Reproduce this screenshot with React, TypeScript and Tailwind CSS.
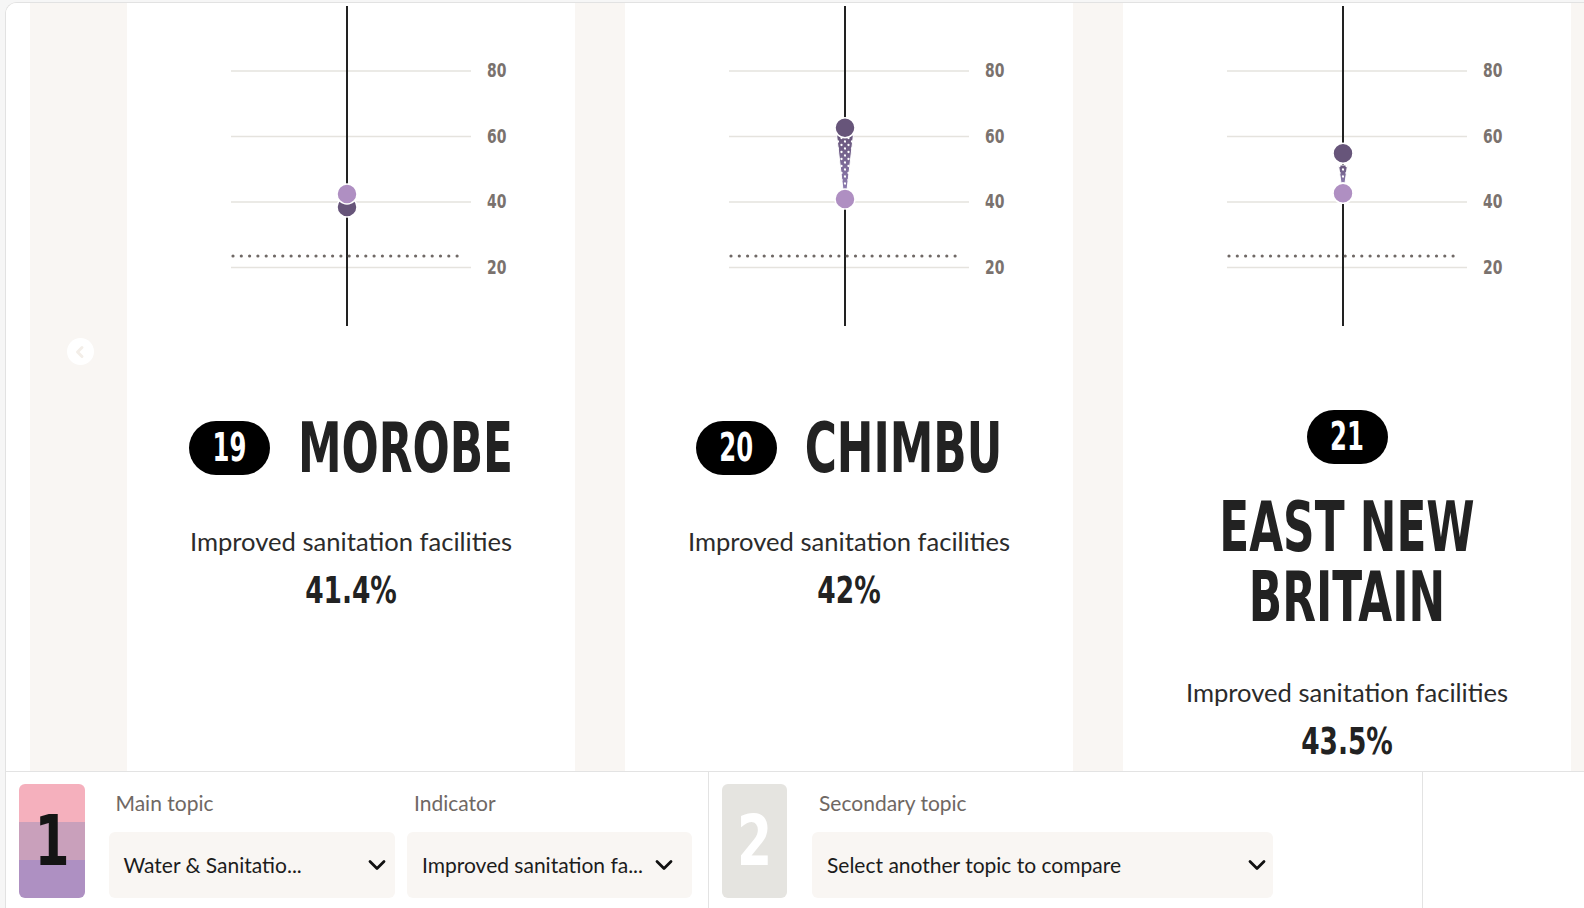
import React from "react";

const COND =
  "font-['Liberation_Sans_Narrow','DejaVu_Sans_Condensed','Liberation_Sans',sans-serif] font-bold";
const LATO = "font-['Lato','Noto_Sans',sans-serif]";

type Conn = { top: number; bottom: number; topHalf: number; bottomHalf: number };

function Chart({ id, dark, light, conn }: { id: string; dark: number; light: number; conn?: Conn }) {
  const X = 220;
  const grid = [
    { v: 80, y: 68 },
    { v: 60, y: 133.5 },
    { v: 40, y: 199 },
    { v: 20, y: 264.5 },
  ];
  const pts = conn
    ? `${X - conn.topHalf},${conn.top} ${X + conn.topHalf},${conn.top} ${X + conn.bottomHalf},${conn.bottom} ${X - conn.bottomHalf},${conn.bottom}`
    : "";
  return (
    <svg width="448" height="330" viewBox="0 0 448 330" className="block shrink-0">
      <defs>
        <linearGradient id={`g${id}`} x1="0" y1="0" x2="0" y2="1">
          <stop offset="0" stopColor="#67557a" />
          <stop offset="1" stopColor="#8e7db0" />
        </linearGradient>
        <pattern id={`p${id}`} width="7" height="7" patternUnits="userSpaceOnUse" x={X - 6} y="0">
          <circle cx="2.5" cy="2" r="1.15" fill="#ffffff" />
          <circle cx="6" cy="5.5" r="1.15" fill="#ffffff" />
        </pattern>
      </defs>
      {grid.map((g) => (
        <line key={`l${g.v}`} x1={104} x2={344} y1={g.y} y2={g.y} stroke="#e5e3de" strokeWidth="1.5" />
      ))}
      {grid.map((g) => (
        <text
          key={`t${g.v}`}
          transform={`translate(360 ${g.y + 6.4}) scale(1 1.2)`}
          x={0}
          y={0}
          fill="#7a726e"
          fontSize="15.5"
          className={COND}
        >
          {g.v}
        </text>
      ))}
      <line x1={X} x2={X} y1={3} y2={323} stroke="#222222" strokeWidth="2" />
      <line
        x1={106}
        x2={338}
        y1={253}
        y2={253}
        stroke="#6f6865"
        strokeWidth="3.2"
        strokeDasharray="0 8.3"
        strokeLinecap="round"
      />
      {conn && (
        <g>
          <polygon points={pts} fill={`url(#g${id})`} stroke="#ffffff" strokeWidth="1" />
          <polygon points={pts} fill={`url(#p${id})`} />
        </g>
      )}
      <circle cx={X} cy={dark} r="10" fill="#67557a" stroke="#ffffff" strokeWidth="1.5" />
      <circle cx={X} cy={light} r="10" fill="#af8fc2" stroke="#ffffff" strokeWidth="1.5" />
    </svg>
  );
}

function Badge({ n }: { n: string }) {
  return (
    <span className="inline-flex items-center justify-center w-[81px] h-[54px] rounded-full bg-black shrink-0">
      <span className={`${COND} inline-block text-[27px] leading-[28px] text-white scale-y-[1.44]`}>{n}</span>
    </span>
  );
}

function Title({ children, h }: { children: React.ReactNode; h: string }) {
  return (
    <div className={`${h} flex items-center justify-center`}>
      <span
        className={`${COND} inline-block whitespace-nowrap text-center text-[48.7px] leading-[48.6px] text-[#222222] scale-y-[1.44]`}
      >
        {children}
      </span>
    </div>
  );
}

function Stat({ value, mt }: { value: string; mt: string }) {
  return (
    <>
      <div className={`${LATO} ${mt} text-[25.6px] leading-[34px] text-[#2b2b2b]`}>
        Improved sanitation facilities
      </div>
      <div className="mt-[9px] h-[46px] flex items-center justify-center">
        <span className={`${COND} inline-block text-[29.4px] leading-[30px] text-[#222222] scale-y-[1.26]`}>
          {value}
        </span>
      </div>
    </>
  );
}

function InlineCard({
  n,
  name,
  value,
  id,
  dark,
  light,
  conn,
}: {
  n: string;
  name: string;
  value: string;
  id: string;
  dark: number;
  light: number;
  conn?: Conn;
}) {
  return (
    <div className="w-[448px] shrink-0 bg-white flex flex-col items-center">
      <Chart id={id} dark={dark} light={light} conn={conn} />
      <div className="mt-[80px] h-[70px] flex items-center gap-[28px]">
        <Badge n={n} />
        <Title h="h-[70px]">{name}</Title>
      </div>
      <Stat value={value} mt="mt-[41px]" />
    </div>
  );
}

function StackCard() {
  return (
    <div className="w-[448px] shrink-0 bg-white flex flex-col items-center">
      <Chart id="c3" dark={150.3} light={190.3} conn={{ top: 162, bottom: 180, topHalf: 4.5, bottomHalf: 2 }} />
      <div className="mt-[77px]">
        <Badge n="21" />
      </div>
      <div className="mt-[28px]">
        <Title h="h-[140px]">
          EAST NEW
          <br />
          BRITAIN
        </Title>
      </div>
      <Stat value="43.5%" mt="mt-[43px]" />
    </div>
  );
}

function Chevron() {
  return (
    <svg width="18" height="12" viewBox="0 0 18 12" className="shrink-0">
      <polyline
        points="2,2.5 9,9.5 16,2.5"
        fill="none"
        stroke="#111111"
        strokeWidth="2.8"
        strokeLinecap="round"
        strokeLinejoin="round"
      />
    </svg>
  );
}

function Field({ label, text, w, pr }: { label: string; text: string; w: string; pr: string }) {
  return (
    <div className={`${w} shrink-0 flex flex-col`}>
      <div className={`${LATO} pl-[7px] text-[21px] leading-[38px] text-[#6f6864]`}>{label}</div>
      <div
        className={`mt-[10px] h-[66px] rounded-[6px] bg-[#f9f6f3] flex items-center justify-between pl-[15px] ${pr}`}
      >
        <span className={`${LATO} text-[21px] text-[#1c1c1c] whitespace-nowrap`}>{text}</span>
        <Chevron />
      </div>
    </div>
  );
}

export default function App() {
  return (
    <div className="w-[1584px] h-[908px] overflow-hidden bg-[#f6f6f6] pl-[5px] pt-[2px]">
      <div className="h-full border-l border-t border-[#e2e2e2] rounded-tl-[12px] overflow-hidden bg-white flex flex-col">
        {/* carousel */}
        <div className="h-[768px] shrink-0 flex bg-[#f9f6f3]">
          <div className="w-[24px] shrink-0 bg-white" />
          <div className="w-[97px] shrink-0 flex justify-center pt-[335px]">
            <div className="ml-[3px] w-[27px] h-[27px] rounded-full bg-white flex items-center justify-center">
              <svg width="14" height="14" viewBox="0 0 14 14">
                <polyline
                  points="9,2.5 4.5,7 9,11.5"
                  fill="none"
                  stroke="#f3eee8"
                  strokeWidth="3"
                  strokeLinecap="round"
                  strokeLinejoin="round"
                />
              </svg>
            </div>
          </div>
          <InlineCard n="19" name="MOROBE" value="41.4%" id="c1" dark={204} light={191} />
          <div className="w-[50px] shrink-0" />
          <InlineCard
            n="20"
            name="CHIMBU"
            value="42%"
            id="c2"
            dark={124.7}
            light={196}
            conn={{ top: 131, bottom: 187, topHalf: 8.5, bottomHalf: 2 }}
          />
          <div className="w-[50px] shrink-0" />
          <StackCard />
          <div className="flex-1" />
        </div>
        {/* controls */}
        <div className="flex-1 flex border-t border-[#e3e3e3] bg-white">
          <div className="w-[703px] shrink-0 border-r border-[#e3e3e3] flex pl-[13px] pt-[12px]">
            <div className="w-[66px] h-[114px] shrink-0 rounded-[6px] bg-[linear-gradient(#f5b0bd_0_33.4%,#c9a0bb_33.4%_66.7%,#ae90c2_66.7%)] flex items-center justify-center">
              <span className={`${COND} inline-block text-[56px] leading-[50px] text-[#141414] scale-y-[1.24]`}>1</span>
            </div>
            <div className="ml-[23.5px]">
              <Field label="Main topic" text="Water & Sanitatio..." w="w-[286px]" pr="pr-[9px]" />
            </div>
            <div className="ml-[12.5px]">
              <Field label="Indicator" text="Improved sanitation fa..." w="w-[285px]" pr="pr-[19px]" />
            </div>
          </div>
          <div className="w-[714px] shrink-0 border-r border-[#e3e3e3] flex pl-[13px] pt-[12px]">
            <div className="w-[65px] h-[114px] shrink-0 rounded-[6px] bg-[#e5e4e0] flex items-center justify-center">
              <span className={`${COND} inline-block text-[56px] leading-[50px] text-white scale-y-[1.24]`}>2</span>
            </div>
            <div className="ml-[25px]">
              <Field label="Secondary topic" text="Select another topic to compare" w="w-[461px]" pr="pr-[7px]" />
            </div>
          </div>
          <div className="flex-1" />
        </div>
      </div>
    </div>
  );
}
